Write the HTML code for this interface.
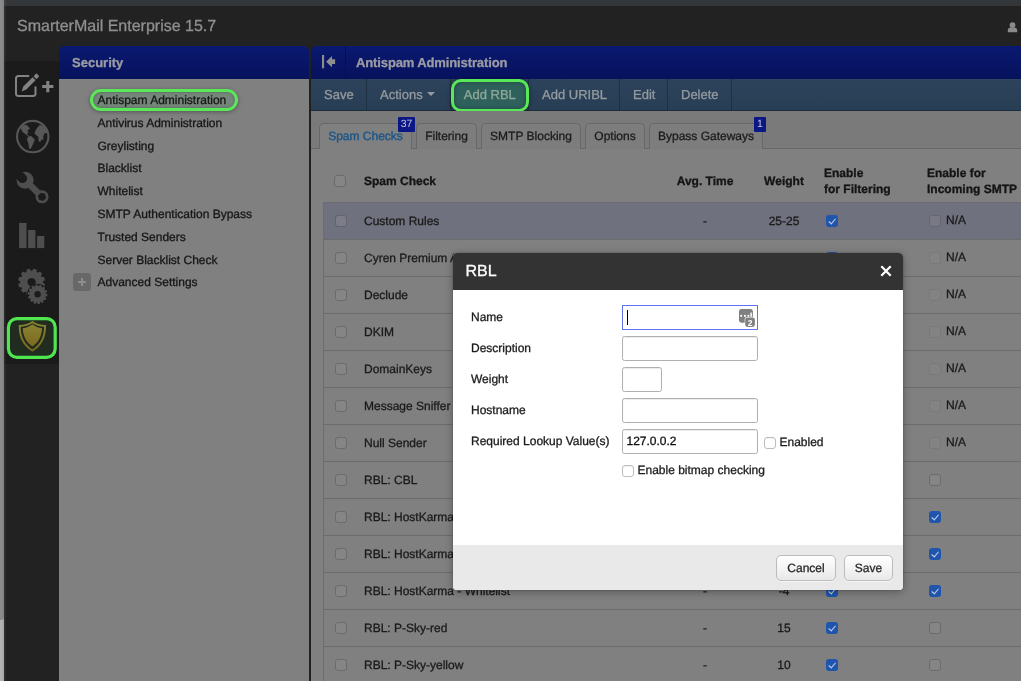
<!DOCTYPE html>
<html lang="en">
<head>
<meta charset="utf-8">
<title>SmarterMail Enterprise 15.7</title>
<style>
*{box-sizing:border-box;margin:0;padding:0}
html,body{width:1021px;height:681px;overflow:hidden;background:#808080}
body{font-family:"Liberation Sans",sans-serif;font-size:12px;color:#1a1a1a;position:relative;-webkit-font-smoothing:antialiased;text-rendering:geometricPrecision;-webkit-text-stroke:.3px}
#sec,#main,#dlg,#title{will-change:transform}
.abs{position:absolute}
/* chrome */
#edge{left:0;top:0;width:4px;height:620px;border-radius:0 0 3px 0;z-index:2;background:linear-gradient(to right,#8b8b8b,#8a8a8a 55%,#7e7e7e)}
#edgeb{left:4px;top:0;width:2px;height:681px;background:linear-gradient(to right,rgba(255,255,255,.07),rgba(255,255,255,.03));z-index:5}
#edge2{left:0;top:612px;width:4px;height:69px;background:linear-gradient(to right,#b3b3b3,#b2b2b2 55%,#a2a2a2)}
#strip{left:4px;top:0;width:1017px;height:6px;background:#33373a}
#hdr{left:4px;top:6px;width:1017px;height:55px;background:#222}
#title{left:17px;top:17px;font-size:16px;line-height:20px;color:#8f8f8f;white-space:nowrap}
#side{left:4px;top:61px;width:55px;height:303px;background:#1b1b1b}
#side2{left:4px;top:364px;width:55px;height:317px;background:#222}
/* security panel */
#sec{left:59px;top:46px;width:250px;height:635px;background:linear-gradient(#0a1971 0,#07125c 33px,#808080 33px);border-radius:6px 6px 0 0;overflow:hidden}
#sechd{left:0;top:0;width:250px;height:33px;background:linear-gradient(#0a1971,#07125c)}
#sechd span{position:absolute;left:13px;top:9px;font-size:13px;font-weight:bold;color:#9b9ba4;line-height:15px}
#split{left:309px;top:46px;width:2px;height:635px;background:#212121}
.nav{left:97.5px;white-space:nowrap;line-height:16px;font-size:12px;color:#151515}
/* main */
#main{left:311px;top:46px;width:710px;height:635px;background:linear-gradient(#0a1971 0,#07125c 33px,#808080 33px);border-radius:6px 0 0 0;overflow:hidden}
#mainhd{left:0;top:0;width:710px;height:33px;background:linear-gradient(#0a1971,#07125c)}
#tb{left:0;top:33px;width:710px;height:32px;background:linear-gradient(#2c435b,#283e55);border-bottom:1px solid #1d2d3e}
.tbi{top:0;height:31px;line-height:31px;font-size:13px;color:#959a9f;white-space:nowrap}
.sep{top:0;width:1px;height:31px;background:#1f3043}

.nv{left:38.5px;line-height:16px;font-size:12px;color:#161616;white-space:nowrap}
#pill{left:30.5px;top:43px;width:148px;height:21.5px;border:3.3px solid #58e858;border-radius:11px;background:#75877a;box-shadow:0 1px 4px rgba(0,0,0,.35),inset 0 0 3px rgba(0,0,0,.3)}
#plus{left:14px;top:227px;width:18px;height:18px;border-radius:3px;background:#686868}
#plus:before{content:"";position:absolute;left:5px;top:8.2px;width:8px;height:1.6px;background:#8e8e8e}
#plus:after{content:"";position:absolute;left:8.2px;top:5px;width:1.6px;height:8px;background:#8e8e8e}
#mtitle{left:45px;top:9px;font-size:13px;font-weight:bold;letter-spacing:-.12px;color:#9b9ba4;line-height:15px;white-space:nowrap}
#hsep{left:34px;top:0;width:1px;height:33px;background:#050d55}
#addrbl{left:140px;top:33px;width:77.5px;height:32.6px;border:3.2px solid #58e858;border-radius:10px;background:#2f615c;box-shadow:0 1px 5px rgba(0,0,0,.45),inset 0 0 4px rgba(0,0,0,.35)}
/* tabs */
#tabstrip{left:0;top:65px;width:710px;height:37px;background:#7a7a7a}
#tabline{left:0;top:102px;width:710px;height:1px;background:#686868}
.tab{top:77px;height:26px;border:1px solid #686868;border-bottom:none;border-radius:5px 5px 0 0;background:#7d7d7d;font-size:12px;line-height:24px;text-align:center;color:#1c1c1c;white-space:nowrap}
.tab.on{background:#808080;color:#1c5688;height:26px;-webkit-text-stroke:.4px}
.badge{top:71px;height:15px;background:#0a1785;color:#c4c6d6;font-size:10.5px;line-height:15px;text-align:center;border-radius:1px;-webkit-text-stroke:0}

/* table */
#tblborder{left:12px;top:156px;width:1px;height:479px;background:#6e6e6e}
.th{font-weight:bold;font-size:12px;line-height:16px;color:#141414;white-space:nowrap}
.row{left:13px;width:697px;height:38px;border-bottom:1px solid #6c6c6c;font-size:12px;line-height:38px;color:#1a1a1a;white-space:nowrap}
.row.sel{background:#70717f;border-top:1px solid #6a6a72;line-height:36px}
.row span{position:absolute;top:0}
.row .nm{left:40px}
.row .av{left:361px;width:40px;text-align:center}
.row .wt{left:430px;width:60px;text-align:center}
.cb{position:absolute;width:12px;height:12px;border:1px solid #6b6b6b;border-radius:3px;background:#858585}
.cb.dis{border-color:#777;background:#858585;opacity:.75}
.cb.ck{border:none;background:#1f55ad}
.cb.ck:after{content:"";position:absolute;left:4.2px;top:1.6px;width:3.2px;height:6.4px;border:solid #c9d3e6;border-width:0 1.5px 1.5px 0;transform:rotate(40deg)}
.row .c0{left:11px;top:13px}
.row .c1{left:502px;top:13px}
.row .c2{left:605px;top:13px}
.row .na{left:622px;margin-top:-1px}
.row.sel .cb{margin-top:-1px}
.row.sel .cb:not(.ck){background:#7b7c88;border-color:#62636d}

/* dialog */
#dlg{left:453px;top:253px;width:450px;height:337px;background:#fff;border-radius:4px;box-shadow:0 2px 9px rgba(0,0,0,.32),0 0 2px rgba(0,0,0,.25);overflow:hidden}
#dlghd{left:0;top:0;width:450px;height:37px;background:#333}
#dlghd b{position:absolute;left:12.5px;top:9px;font-size:16px;line-height:20px;font-weight:normal;color:#fff}
#dlgft{left:0;top:292px;width:450px;height:45px;background:#e9e9e9}
.lbl{left:18px;font-size:12px;line-height:16px;color:#1c1c1c;white-space:nowrap}
.inp{left:169px;width:136px;height:25px;border:1px solid #b0b0b0;border-radius:2.5px;background:#fff;box-shadow:inset 0 1px 1px rgba(0,0,0,.08);font-size:12px;line-height:23px;padding-left:3.5px;color:#111}
.inp.foc{border:1px solid #6071f3;border-radius:0;box-shadow:none}
.dcb{width:12px;height:12px;border:1px solid #bdbdbd;border-radius:3px;background:#fff;box-shadow:inset 0 1px 1px rgba(0,0,0,.06)}
.btn{top:302px;height:26px;border:1px solid #bcbcbc;border-radius:5px;background:linear-gradient(#fff,#f4f4f4 50%,#e8e8e8);font-size:12px;line-height:24px;text-align:center;color:#2a2a2a;box-shadow:0 1px 0 rgba(255,255,255,.6)}
</style>
</head>
<body>
<div class="abs" id="edge"></div><div class="abs" id="edge2"></div><div class="abs" id="edgeb"></div>
<div class="abs" id="strip"></div>
<div class="abs" id="hdr"></div>
<div class="abs" id="title">SmarterMail Enterprise 15.7</div>
<svg class="abs" style="left:1005px;top:20px" width="16" height="14" viewBox="1005 20 16 14"><circle cx="1012.5" cy="25.1" r="2.9" fill="#8a8a8a"/><path d="M1007.8 32.2V30.6a3 3 0 0 1 3-3h3.4a3 3 0 0 1 3 3v1.6Z" fill="#8a8a8a"/></svg>
<div class="abs" id="side"></div><div class="abs" id="side2"></div>

<!-- SIDEBAR ICONS -->
<div id="icons"><svg class="abs" style="left:5px;top:61px" width="54" height="303" viewBox="5 61 54 303">
<path d="M29.2 75.9H18.6a2.6 2.6 0 0 0-2.6 2.6v15a2.6 2.6 0 0 0 2.6 2.6h14.3a2.6 2.6 0 0 0 2.6-2.6V86.4" fill="none" stroke="#838383" stroke-width="2"/>
<path d="M21.6 91.4L23.3 86.6L32.6 77.2L35.6 80.2L26.3 89.6Z" fill="#838383"/>
<path d="M33.5 76.2L35.9 73.8a.8.8 0 0 1 1.1 0L38.8 75.7a.8.8 0 0 1 0 1.1L36.5 79.2Z" fill="#838383"/>
<path d="M42.2 86.6H53.4M47.8 81V92.2" stroke="#838383" stroke-width="3" fill="none"/>
<circle cx="32.75" cy="136.55" r="15.7" fill="none" stroke="#575757" stroke-width="2.1"/>
<polygon points="20.7,128.1 22.5,125.4 26.5,124.7 30.0,128.6 27.5,130.5 28.6,133.1 26.5,133.5 29.1,136.0 27.0,135.6 24.6,133.5 22.5,132.1" fill="#575757"/>
<polygon points="28.0,136.5 31.1,136.0 34.9,139.6 33.1,143.9 30.7,148.8 29.1,148.8 28.4,143.4 26.9,139.6" fill="#575757"/>
<polygon points="39.9,125.0 44.1,126.1 47.5,130.2 48.7,135.6 46.6,133.1 44.5,133.3 43.2,136.7 43.5,139.5 41.3,139.8 40.2,142.2 38.6,141.0 38.3,136.8 36.2,135.3 34.4,133.1 36.1,129.6 37.6,127.2" fill="#575757"/>
<circle cx="25.1" cy="180.2" r="8.5" fill="#4e4e4e"/>
<path d="M22.5 178.4L16 171.9" stroke="#1b1b1b" stroke-width="9.2" stroke-linecap="round" fill="none"/>
<path d="M28 183L39.5 194.4" stroke="#4e4e4e" stroke-width="6.6" fill="none"/>
<circle cx="42" cy="196.8" r="6.5" fill="#4e4e4e"/>
<polygon points="46.15,197.91 43.11,200.95 38.96,199.84 37.85,195.69 40.89,192.65 45.04,193.76" fill="#1b1b1b"/>
<rect x="19.1" y="222.9" width="7.4" height="25.2" fill="#4e4e4e"/>
<rect x="28.1" y="230" width="7.3" height="18.1" fill="#4e4e4e"/>
<rect x="37.1" y="236" width="7.2" height="12.1" fill="#4e4e4e"/>
<path d="M42.90 282.08 L42.88 282.76 L44.97 283.94 L44.12 287.15 L41.72 287.13 L41.40 287.73 L41.04 288.31 L42.26 290.38 L39.92 292.73 L37.85 291.52 L37.27 291.88 L36.67 292.20 L36.69 294.60 L33.49 295.47 L32.30 293.38 L31.62 293.40 L30.94 293.38 L29.76 295.47 L26.55 294.62 L26.57 292.22 L25.97 291.90 L25.39 291.54 L23.32 292.76 L20.97 290.42 L22.18 288.35 L21.82 287.77 L21.50 287.17 L19.10 287.19 L18.23 283.99 L20.32 282.80 L20.30 282.12 L20.32 281.44 L18.23 280.26 L19.08 277.05 L21.48 277.07 L21.80 276.47 L22.16 275.89 L20.94 273.82 L23.28 271.47 L25.35 272.68 L25.93 272.32 L26.53 272.00 L26.51 269.60 L29.71 268.73 L30.90 270.82 L31.58 270.80 L32.26 270.82 L33.44 268.73 L36.65 269.58 L36.63 271.98 L37.23 272.30 L37.81 272.66 L39.88 271.44 L42.23 273.78 L41.02 275.85 L41.38 276.43 L41.70 277.03 L44.10 277.01 L44.97 280.21 L42.88 281.40Z" fill="#4e4e4e"/>
<circle cx="31.6" cy="282.1" r="4.2" fill="#1b1b1b"/>
<circle cx="37.6" cy="294.3" r="10.6" fill="#1b1b1b"/>
<path d="M45.74 293.28 L45.78 293.71 L47.50 294.24 L47.29 296.32 L45.50 296.51 L45.37 296.91 L45.23 297.31 L46.54 298.54 L45.45 300.33 L43.76 299.72 L43.47 300.03 L43.16 300.32 L43.82 302.00 L42.06 303.14 L40.80 301.85 L40.40 302.01 L40.00 302.14 L39.86 303.94 L37.78 304.20 L37.21 302.49 L36.78 302.46 L36.36 302.41 L35.45 303.96 L33.47 303.30 L33.69 301.51 L33.32 301.30 L32.97 301.06 L31.47 302.08 L29.98 300.62 L30.95 299.10 L30.71 298.75 L30.49 298.38 L28.71 298.65 L27.99 296.68 L29.53 295.74 L29.46 295.32 L29.42 294.89 L27.70 294.36 L27.91 292.28 L29.70 292.09 L29.83 291.69 L29.97 291.29 L28.66 290.06 L29.75 288.27 L31.44 288.88 L31.73 288.57 L32.04 288.28 L31.38 286.60 L33.14 285.46 L34.40 286.75 L34.80 286.59 L35.20 286.46 L35.34 284.66 L37.42 284.40 L37.99 286.11 L38.42 286.14 L38.84 286.19 L39.75 284.64 L41.73 285.30 L41.51 287.09 L41.88 287.30 L42.23 287.54 L43.73 286.52 L45.22 287.98 L44.25 289.50 L44.49 289.85 L44.71 290.22 L46.49 289.95 L47.21 291.92 L45.67 292.86Z" fill="#4e4e4e"/>
<circle cx="37.6" cy="294.3" r="3.2" fill="#1b1b1b"/>
<rect x="8.4" y="318.7" width="46.8" height="38.6" rx="8.5" fill="#202c20" stroke="#50e650" stroke-width="3.2"/>
<defs><linearGradient id="sg" x1="0" y1="0" x2="0" y2="1"><stop offset="0" stop-color="#8a8232"/><stop offset="1" stop-color="#7c6a1e"/></linearGradient></defs>
<path d="M32.4 321.4C28.5 324.2 23.5 325.5 19.1 325.5C19.1 336 23 345.5 32.4 351.2C41.8 345.5 45.7 336 45.7 325.5C41.3 325.5 36.3 324.2 32.4 321.4Z" fill="none" stroke="url(#sg)" stroke-width="2" transform="translate(32.4 336.3) scale(.955) translate(-32.4 -336.3)"/>
<path d="M32.4 324.8C29.6 326.9 26.5 328.3 23.3 328.6C23.6 336 26.5 341.8 32.4 345.8C38.3 341.8 41.2 336 41.5 328.6C38.3 328.3 35.2 326.9 32.4 324.8Z" fill="url(#sg)" transform="translate(32.4 335.3) scale(1.06) translate(-32.4 -335.3)"/>
</svg></div>

<!-- SECURITY PANEL -->
<div class="abs" id="sec">
  <div class="abs" id="sechd"><span>Security</span></div>
  <div class="abs" id="pill"></div>
  <div class="abs nv" style="top:46px">Antispam Administration</div>
  <div class="abs nv" style="top:69px">Antivirus Administration</div>
  <div class="abs nv" style="top:92px">Greylisting</div>
  <div class="abs nv" style="top:114px">Blacklist</div>
  <div class="abs nv" style="top:137px">Whitelist</div>
  <div class="abs nv" style="top:160px">SMTP Authentication Bypass</div>
  <div class="abs nv" style="top:183px">Trusted Senders</div>
  <div class="abs nv" style="top:206px">Server Blacklist Check</div>
  <div class="abs nv" style="top:228px">Advanced Settings</div>
  <div class="abs" id="plus"></div>
</div>
<div class="abs" id="split"></div>

<!-- MAIN PANEL -->
<div class="abs" id="main">
  <div class="abs" id="mainhd"><svg class="abs" style="left:9px;top:7px" width="18" height="18" viewBox="320 53 18 18"><rect x="322" y="55" width="2.1" height="13.3" fill="#8e8e8e"/><path d="M326.1 61.65L332 56.1V59.2H335.1V64.1H332V67.2Z" fill="#8e8e8e"/></svg><div class="abs" id="hsep"></div><div class="abs" id="mtitle">Antispam Administration</div></div>
  <div class="abs" id="tb">
    <div class="abs tbi" style="left:13px">Save</div><div class="abs sep" style="left:55px"></div>
    <div class="abs tbi" style="left:69px">Actions</div>
    <div class="abs" style="left:116px;top:13px;width:0;height:0;border-left:4px solid transparent;border-right:4px solid transparent;border-top:4px solid #959a9f"></div>
    <div class="abs sep" style="left:139px"></div>
    <div class="abs sep" style="left:217px"></div>
    <div class="abs tbi" style="left:231px">Add URIBL</div><div class="abs sep" style="left:308px"></div>
    <div class="abs tbi" style="left:322px">Edit</div><div class="abs sep" style="left:356px"></div>
    <div class="abs tbi" style="left:370px">Delete</div><div class="abs sep" style="left:420px"></div>
  </div>
  <div class="abs" id="addrbl"><div class="abs tbi" style="left:9.8px;top:-3.2px;color:#8fa899">Add RBL</div></div>
  <div class="abs" id="tabstrip"></div>
  <div class="abs" id="tabline"></div>
  <div class="abs tab on" style="left:8px;width:93px">Spam Checks</div>
  <div class="abs tab" style="left:105px;width:61px">Filtering</div>
  <div class="abs tab" style="left:170px;width:100px">SMTP Blocking</div>
  <div class="abs tab" style="left:274px;width:60px">Options</div>
  <div class="abs tab" style="left:338px;width:114px">Bypass Gateways</div>
  <div class="abs badge" style="left:87px;width:17px">37</div>
  <div class="abs badge" style="left:443px;width:12px">1</div>
<div class="abs" id="tblborder"></div>
  <span class="abs cb" style="left:23px;top:129px"></span>
  <div class="abs th" style="left:53px;top:127px">Spam Check</div>
  <div class="abs th" style="left:354px;top:127px;width:80px;text-align:center">Avg. Time</div>
  <div class="abs th" style="left:443px;top:127px;width:60px;text-align:center">Weight</div>
  <div class="abs th" style="left:513px;top:119px">Enable<br>for Filtering</div>
  <div class="abs th" style="left:616px;top:119px">Enable for<br>Incoming SMTP</div>
  <div class="abs row sel" style="top:156px"><span class="cb c0"></span><span class="nm">Custom Rules</span><span class="av">-</span><span class="wt">25-25</span><span class="cb c1 ck"></span><span class="cb c2 dis"></span><span class="na">N/A</span></div>
  <div class="abs row" style="top:193px"><span class="cb c0"></span><span class="nm">Cyren Premium Antispam</span><span class="av">-</span><span class="wt">30</span><span class="cb c1 ck"></span><span class="cb c2 dis"></span><span class="na">N/A</span></div>
  <div class="abs row" style="top:230px"><span class="cb c0"></span><span class="nm">Declude</span><span class="av">-</span><span class="wt">10</span><span class="cb c1"></span><span class="cb c2 dis"></span><span class="na">N/A</span></div>
  <div class="abs row" style="top:267px"><span class="cb c0"></span><span class="nm">DKIM</span><span class="av">-</span><span class="wt">10-20</span><span class="cb c1 ck"></span><span class="cb c2 dis"></span><span class="na">N/A</span></div>
  <div class="abs row" style="top:304px"><span class="cb c0"></span><span class="nm">DomainKeys</span><span class="av">-</span><span class="wt">10-20</span><span class="cb c1"></span><span class="cb c2 dis"></span><span class="na">N/A</span></div>
  <div class="abs row" style="top:341px"><span class="cb c0"></span><span class="nm">Message Sniffer</span><span class="av">-</span><span class="wt">10</span><span class="cb c1"></span><span class="cb c2 dis"></span><span class="na">N/A</span></div>
  <div class="abs row" style="top:378px"><span class="cb c0"></span><span class="nm">Null Sender</span><span class="av">-</span><span class="wt">10</span><span class="cb c1 ck"></span><span class="cb c2 dis"></span><span class="na">N/A</span></div>
  <div class="abs row" style="top:415px"><span class="cb c0"></span><span class="nm">RBL: CBL</span><span class="av">-</span><span class="wt">10</span><span class="cb c1 ck"></span><span class="cb c2"></span></div>
  <div class="abs row" style="top:452px"><span class="cb c0"></span><span class="nm">RBL: HostKarma - Blacklist</span><span class="av">-</span><span class="wt">10</span><span class="cb c1 ck"></span><span class="cb c2 ck"></span></div>
  <div class="abs row" style="top:489px"><span class="cb c0"></span><span class="nm">RBL: HostKarma - Brown</span><span class="av">-</span><span class="wt">5</span><span class="cb c1 ck"></span><span class="cb c2 ck"></span></div>
  <div class="abs row" style="top:526px"><span class="cb c0"></span><span class="nm">RBL: HostKarma - Whitelist</span><span class="av">-</span><span class="wt">-4</span><span class="cb c1 ck"></span><span class="cb c2 ck"></span></div>
  <div class="abs row" style="top:563px"><span class="cb c0"></span><span class="nm">RBL: P-Sky-red</span><span class="av">-</span><span class="wt">15</span><span class="cb c1 ck"></span><span class="cb c2"></span></div>
  <div class="abs row" style="top:600px"><span class="cb c0"></span><span class="nm">RBL: P-Sky-yellow</span><span class="av">-</span><span class="wt">10</span><span class="cb c1 ck"></span><span class="cb c2"></span></div>
</div>

<div class="abs" id="dlg">
  <div class="abs" id="dlghd"><b>RBL</b>
    <svg class="abs" style="left:427px;top:11.5px" width="12" height="12" viewBox="0 0 12 12"><path d="M1.3 1.3 L10.7 10.7 M10.7 1.3 L1.3 10.7" stroke="#fff" stroke-width="2.3" fill="none"/></svg>
  </div>
  <div class="abs lbl" style="top:56px">Name</div>
  <div class="abs lbl" style="top:87px">Description</div>
  <div class="abs lbl" style="top:118px">Weight</div>
  <div class="abs lbl" style="top:149px">Hostname</div>
  <div class="abs lbl" style="top:180px">Required Lookup Value(s)</div>
  <div class="abs inp foc" style="top:52px"></div>
  <div class="abs" style="left:174px;top:57px;width:1px;height:15px;background:#000"></div>
  <svg class="abs" style="left:284px;top:54px" width="20" height="22" viewBox="284 54 20 22"><rect x="286" y="56" width="13.9" height="13.7" rx="2.4" fill="#808080"/><rect x="287.3" y="61.9" width="1.8" height="1.9" fill="#fff"/><rect x="291" y="61.9" width="1.8" height="1.9" fill="#fff"/><rect x="294.5" y="61.9" width="1.8" height="1.9" fill="#fff"/><rect x="297.4" y="59.6" width="1.5" height="4.2" fill="#fff"/><rect x="291.7" y="63.9" width="10.5" height="10.3" rx="2.6" fill="#fff"/><rect x="292.2" y="64.4" width="9.7" height="9.5" rx="2.3" fill="#808080"/><text x="297.05" y="72.5" font-family="Liberation Sans,sans-serif" font-weight="bold" font-size="8.6" fill="#fff" stroke="none" text-anchor="middle">2</text></svg>
  <div class="abs inp" style="top:83px"></div>
  <div class="abs inp" style="top:114px;width:40px"></div>
  <div class="abs inp" style="top:145px"></div>
  <div class="abs inp" style="top:176px">127.0.0.2</div>
  <div class="abs dcb" style="left:311px;top:184px"></div>
  <div class="abs lbl" style="left:326.5px;top:181px">Enabled</div>
  <div class="abs dcb" style="left:169px;top:212px"></div>
  <div class="abs lbl" style="left:184.5px;top:209px">Enable bitmap checking</div>
  <div class="abs" id="dlgft"></div>
  <div class="abs btn" style="left:323px;width:60px">Cancel</div>
  <div class="abs btn" style="left:391px;width:49px">Save</div>
</div>

</body>
</html>
